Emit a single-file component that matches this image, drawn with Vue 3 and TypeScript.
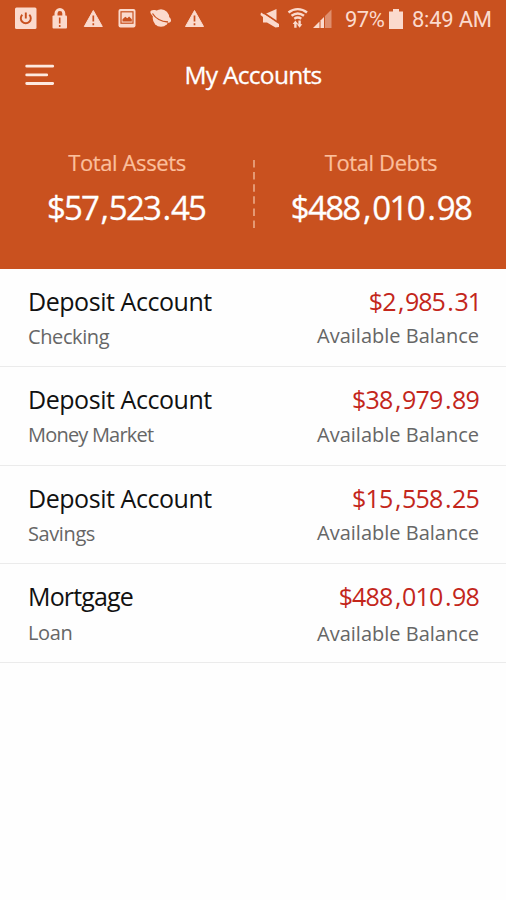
<script setup lang="ts">
interface Account {
  name: string
  kind: string
  balance: string
}

interface Total {
  label: string
  amount: string
}

const totals: Total[] = [
  { label: 'Total Assets', amount: '$57,523.45' },
  { label: 'Total Debts', amount: '$488,010.98' },
]

const accounts: Account[] = [
  { name: 'Deposit Account', kind: 'Checking', balance: '$2,985.31' },
  { name: 'Deposit Account', kind: 'Money Market', balance: '$38,979.89' },
  { name: 'Deposit Account', kind: 'Savings', balance: '$15,558.25' },
  { name: 'Mortgage', kind: 'Loan', balance: '$488,010.98' },
]

// Splits an amount so that its separators can be spaced wider than its digits.
const parts = (amount: string): string[] => amount.split(/([,.])/)
const isSeparator = (part: string): boolean => part === ',' || part === '.'
const isWide = (text: string): boolean => text.startsWith('M')
</script>

<template>
  <div class="screen">
    <header class="header">
      <div class="status">
        <svg class="status-left" width="210" height="40" viewBox="0 0 210 40">
          <rect x="15" y="7.500" width="21.500" height="21.500" rx="1.500" class="light" />
          <path d="M22.300 14.700a5 5 0 1 0 7 0M25.800 12.500v6" class="cut" stroke-width="1.900" />
          <path d="M56 17v-3.500a3.900 3.900 0 0 1 7.800 0V17" class="line" stroke-width="3" />
          <rect x="52.500" y="15.500" width="14.500" height="13" rx="1" class="light" />
          <path d="M59.700 17.500v6M59.700 25v2" class="cut" stroke-width="1.600" />
          <path d="M93.300 10.500L102.300 26.500H84.300Z" class="light join" />
          <path d="M93.300 15.500v6M93.300 23.300v2" class="cut" stroke-width="1.700" />
          <rect x="118.500" y="9" width="17" height="18.500" rx="2" class="light" />
          <rect x="121" y="11.800" width="12" height="11.400" class="cut" stroke-width="1.200" />
          <path d="M122.500 21.500v-2.200l2.800-2.500 2 1.500 1.800-1.800 2.700 2.800v2.200Z" fill="#c9511f" />
          <ellipse cx="161" cy="18" rx="8.300" ry="8.800" class="light" />
          <path d="M156.500 10.500c-4-1-7 0-6 2.500 1.500 4 10 9.500 17 9.800 3.500 0 4.500-2 2.500-5Z" class="light" />
          <path d="M152.500 13.500c3 4.800 9 8 15.500 8.500" class="cut" stroke-width="1.300" />
          <path d="M194.500 10.500L203.500 26.500H185.500Z" class="light join" />
          <path d="M194.500 15.500v6M194.500 23.300v2" class="cut" stroke-width="1.700" />
        </svg>
        <div class="status-right">
          <svg width="76" height="40" viewBox="258 0 76 40">
            <path d="M264 14.500l12.500-5.500v12.500l-4-1-9-4.500Z" class="light" />
            <path d="M261 11L279.500 23.500" stroke="#c9511f" stroke-width="1.800" />
            <path d="M261 12.500l18 11.500v3l-3.500.5-8.500-5h-4v-5.500l-2.500-2Z" class="light" />
            <path d="M288.500 12.500c5.500-4.500 13-4.500 18.500 0M291.500 15.800c4-3 8.500-3 12.500 0M294.300 18.800c2.300-1.600 4.700-1.600 7 0" class="line" stroke-width="2.400" />
            <path d="M292.700 24l2.700-3.500 2.700 3.500h-1.500v3.800h-2.400v-3.800ZM296.900 24.200h1.500v-3.700h2.400v3.700h1.500l-2.700 3.600Z" class="light" />
            <path d="M313 28l6.500-6.500V28Z" class="light" />
            <path d="M320.500 20.500l3.500-3.500v11h-3.500Z" class="light" />
            <path d="M325 16l6.500-6.500V28H325Z" class="light" opacity=".45" />
          </svg>
          <span class="percent">97%</span>
          <svg class="battery" width="14" height="20" viewBox="0 0 14 20">
            <path d="M4 0h6v2.500h4V20H0V2.500h4Z" class="light" />
          </svg>
          <span class="clock">8:49 AM</span>
        </div>
      </div>

      <div class="nav">
        <svg class="menu" width="30" height="22" viewBox="0 0 30 22">
          <path d="M1.700 2.200h26M1.700 10.900h20M1.700 19.500h26" stroke="#fde9e0" stroke-width="2.800" stroke-linecap="round" />
        </svg>
        <h1 class="title">My Accounts</h1>
      </div>

      <div class="totals">
        <div v-for="total in totals" :key="total.label" class="total">
          <div class="total-label">{{ total.label }}</div>
          <div class="total-amount">
            <span v-for="(part, i) in parts(total.amount)" :key="i" :class="{ sep: isSeparator(part) }">{{ part }}</span>
          </div>
        </div>
        <svg class="divider" width="2" height="68" viewBox="0 0 2 68">
          <path d="M1 0v68" stroke="#f3bfa2" stroke-width="1.300" stroke-dasharray="7.500 4.600" />
        </svg>
      </div>
    </header>

    <main>
      <section v-for="(account, n) in accounts" :key="n" class="account">
        <div>
          <div class="name" :class="{ wide: isWide(account.name) }">{{ account.name }}</div>
          <div class="kind" :class="{ wide: isWide(account.kind) }">{{ account.kind }}</div>
        </div>
        <div class="right">
          <div class="balance">
            <span v-for="(part, i) in parts(account.balance)" :key="i" :class="{ sep: isSeparator(part) }">{{ part }}</span>
          </div>
          <div class="available">Available Balance</div>
        </div>
      </section>
    </main>
  </div>
</template>

<style>
body {
  margin: 0;
  background: #fff;
}
</style>

<style scoped>
.screen {
  width: 506px;
  height: 900px;
  overflow: hidden;
  background: #fefefe;
  font-family: 'Trebuchet MS', 'Open Sans', sans-serif;
  white-space: nowrap;
}
.header {
  height: 268.5px;
  background: #c9511f;
}
.status {
  display: flex;
  justify-content: space-between;
  height: 40px;
  font: 400 22px/40px Roboto, sans-serif;
  color: #fbdacd;
}
.status svg {
  display: block;
}
.light {
  fill: #fbdacd;
}
.join {
  stroke: #fbdacd;
  stroke-width: 1;
  stroke-linejoin: round;
}
.line {
  fill: none;
  stroke: #fbdacd;
}
.cut {
  fill: none;
  stroke: #c9511f;
}
.status-right {
  display: flex;
  align-items: center;
  width: 248px;
}
.percent {
  width: 44px;
  margin-left: 11px;
  letter-spacing: -0.5px;
}
.battery {
  margin: -3px 9px 0 0;
}
.clock {
  letter-spacing: -0.25px;
}
.nav {
  display: grid;
  grid-template-columns: 80px 1fr 80px;
  align-items: center;
  height: 70px;
}
.menu {
  margin-left: 25px;
}
.title {
  margin: 0;
  text-align: center;
  font-size: 24.5px;
  line-height: 36px;
  font-weight: 500;
  letter-spacing: -0.7px;
  -webkit-text-stroke: 0.3px #fff;
  color: #fff;
}
.totals {
  display: grid;
  grid-template-columns: 254px 254px;
  position: relative;
  padding-top: 37px;
}
.total {
  text-align: center;
}
.total-label {
  font-size: 22px;
  line-height: 30px;
  letter-spacing: -0.4px;
  -webkit-text-stroke: 0.2px #fbbf9c;
  color: #fbbf9c;
}
.total-amount {
  margin-top: 7px;
  padding-right: 2px;
  font-size: 33px;
  line-height: 47px;
  font-weight: 500;
  letter-spacing: -1.8px;
  -webkit-text-stroke: 0.3px #fff;
  color: #fff;
}
.total-amount .sep {
  margin: 0 1.5px 0 2.5px;
}
.total:nth-child(2) .total-amount {
  padding-right: 0;
  letter-spacing: -1.7px;
}
.total:nth-child(2) .sep {
  margin: 0 2.5px 0 3.5px;
}
.divider {
  position: absolute;
  left: 253px;
  top: 50px;
}
.account {
  display: flex;
  justify-content: space-between;
  box-sizing: border-box;
  height: 98.5px;
  padding: 14px 27px 0 28px;
  border-bottom: 1px solid #ebebeb;
}
.name,
.balance {
  height: 39px;
  font-size: 25px;
  line-height: 36px;
}
.name {
  letter-spacing: -0.45px;
  color: #111;
}
.name.wide {
  letter-spacing: -0.85px;
}
.balance {
  letter-spacing: -0.85px;
  color: #c3261b;
}
.balance .sep {
  margin: 0 1.5px 0 2.5px;
}
.account:first-child .balance {
  margin-right: -2px;
  letter-spacing: -1px;
}
.right {
  text-align: right;
}
.kind,
.available {
  font-size: 20px;
  line-height: 30px;
  color: #666;
}
.kind {
  letter-spacing: -0.4px;
}
.kind.wide {
  letter-spacing: -0.8px;
}
.available {
  margin-top: -0.5px;
}
.account:last-child .kind {
  padding-top: 1px;
}
.account:last-child .available {
  padding-top: 2px;
}
</style>
